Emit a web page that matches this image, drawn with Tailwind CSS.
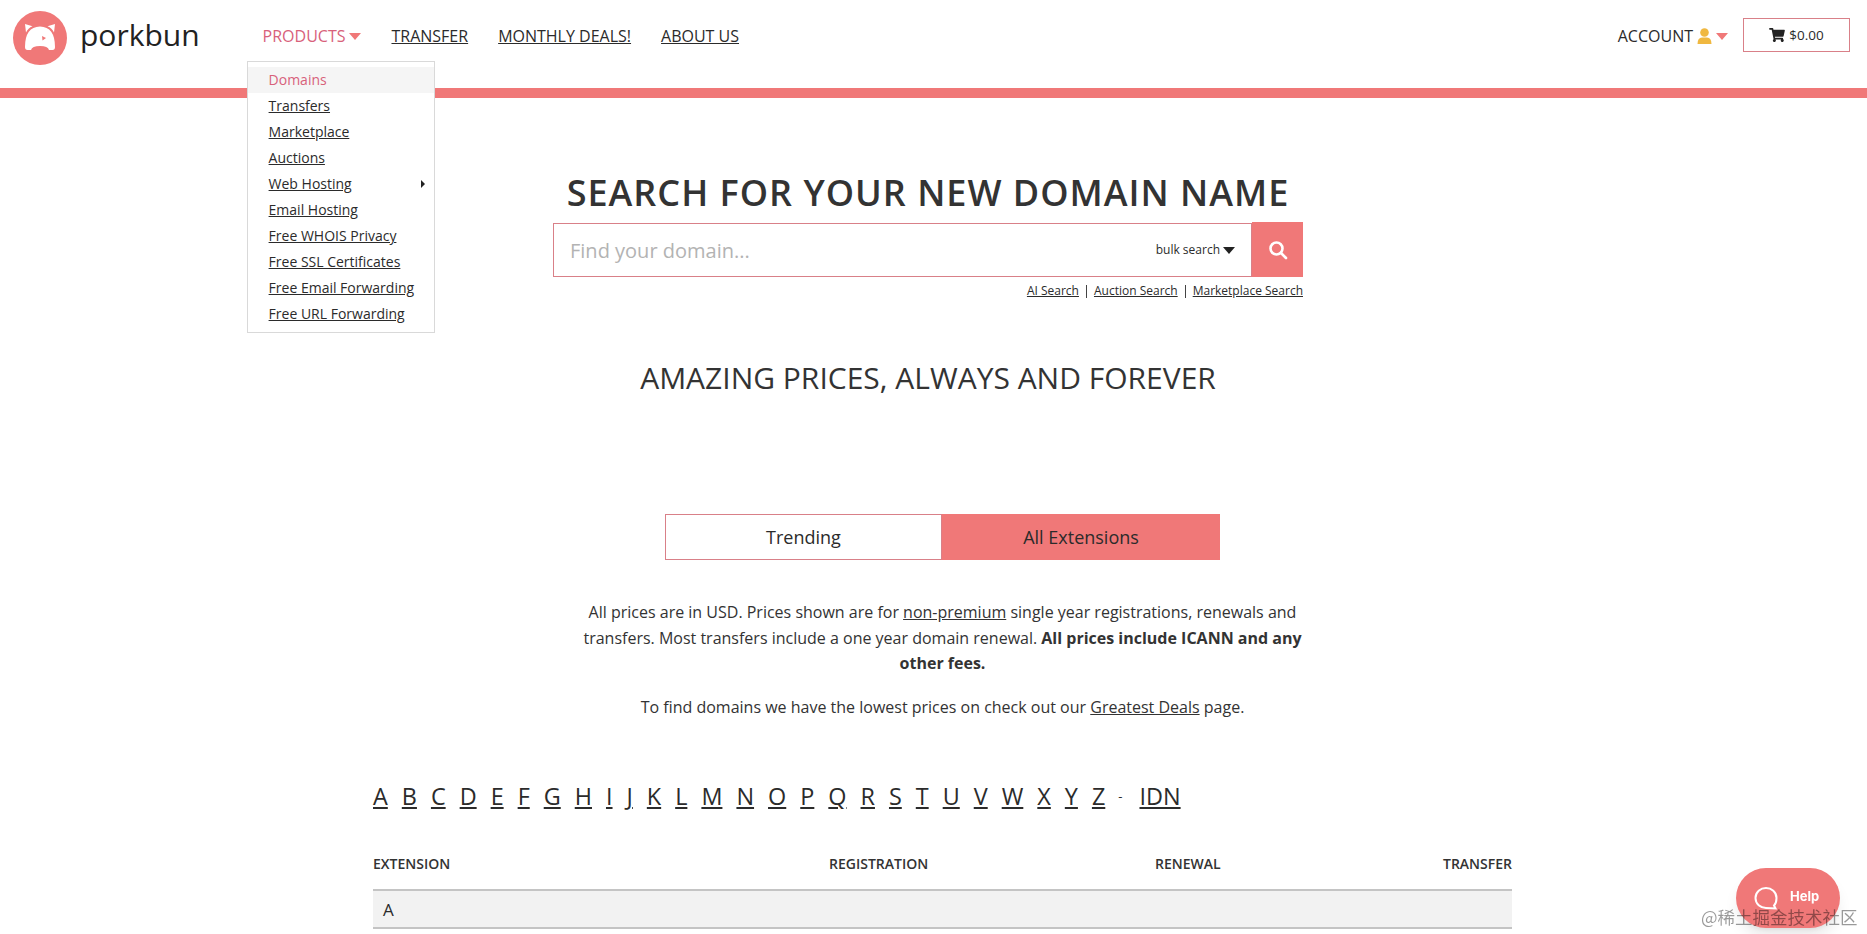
<!DOCTYPE html>
<html lang="en">
<head>
  <meta charset="UTF-8" />
  <meta name="viewport" content="width=device-width, initial-scale=1.0" />
  <title>porkbun - Domain Pricing</title>
  <script src="https://cdn.jsdelivr.net/npm/@tailwindcss/browser@4"></script>
</head>
<body class="h-[934px] overflow-hidden bg-white text-[#2b2b2b] font-['Open_Sans','Noto_Sans',sans-serif]">

  <!-- Header -->
  <header class="relative h-[88px] flex items-start">
    <a href="#" class="flex items-center ml-[13px] mt-[11px] shrink-0">
      <svg width="54" height="54" viewBox="0 0 54 54">
        <circle cx="27" cy="27" r="27" fill="#f07878" />
        <path d="M12 36 Q12 16 27 15.5 Q42 16 42 36 Q42 39 39.5 39 L36 39 Q35 35 27 35 Q19 35 18 39 L14.5 39 Q12 39 12 36 Z" fill="#fff" />
        <path d="M12 13 L19.5 15.2 Q15 17 13 21.5 Z" fill="#fff" />
        <path d="M42 13 L34.5 15.2 Q39 17 41 21.5 Z" fill="#fff" />
        <path d="M29 25 L33 27 L29.5 29.5 Z" fill="#f07878" />
      </svg>
      <span class="ml-[13px] -mt-[7px] text-[30px] leading-none text-[#222]">porkbun</span>
    </a>

    <nav class="flex gap-[30px] ml-[63px] mt-[24px] text-[16px] leading-[24px]">
      <div class="relative flex items-center gap-[4px] text-[#d8617b]">
        <span>PRODUCTS</span>
        <span class="w-0 h-0 border-x-[6px] border-x-transparent border-t-[7px] border-t-[#f07878]"></span>

        <!-- Products dropdown -->
        <div class="absolute z-10 left-[-16px] top-[37px] w-[188px] h-[272px] pt-[5px] bg-white border border-[#d9d9d9] text-[14px] leading-[26px] text-[#2b2b2b]">
          <a href="#" class="block h-[26px] pl-[21px] bg-[#f5f5f5] text-[#d8617b]">Domains</a>
          <a href="#" class="block h-[26px] pl-[21px] underline">Transfers</a>
          <a href="#" class="block h-[26px] pl-[21px] underline">Marketplace</a>
          <a href="#" class="block h-[26px] pl-[21px] underline">Auctions</a>
          <div class="flex items-center justify-between h-[26px] pl-[21px] pr-[9px]">
            <a href="#" class="underline">Web Hosting</a>
            <span class="w-0 h-0 border-y-[4px] border-y-transparent border-l-[4px] border-l-[#222]"></span>
          </div>
          <a href="#" class="block h-[26px] pl-[21px] underline">Email Hosting</a>
          <a href="#" class="block h-[26px] pl-[21px] underline">Free WHOIS Privacy</a>
          <a href="#" class="block h-[26px] pl-[21px] underline">Free SSL Certificates</a>
          <a href="#" class="block h-[26px] pl-[21px] underline">Free Email Forwarding</a>
          <a href="#" class="block h-[26px] pl-[21px] underline">Free URL Forwarding</a>
        </div>
      </div>
      <a href="#" class="underline">TRANSFER</a>
      <a href="#" class="underline">MONTHLY DEALS!</a>
      <a href="#" class="underline">ABOUT US</a>
    </nav>

    <div class="ml-auto mr-[17px] mt-[18px] flex items-center">
      <span class="text-[16px] mt-[2px] ml-[1px]">ACCOUNT</span>
      <svg class="ml-[4px] mt-[2px]" width="15" height="16" viewBox="0 0 15 16">
        <circle cx="7.5" cy="4.5" r="4.3" fill="#f0b840" />
        <path d="M0.5 16 Q0.5 9.5 5 9.5 L10 9.5 Q14.5 9.5 14.5 16 Z" fill="#f0b840" />
      </svg>
      <span class="ml-[4px] mt-[2px] w-0 h-0 border-x-[6px] border-x-transparent border-t-[7px] border-t-[#f07878]"></span>
      <a href="#" class="ml-[15px] w-[107px] h-[34px] flex items-center justify-center gap-[4px] border border-[#d98088] text-[13.5px]">
        <svg width="16" height="14" viewBox="0 0 576 512" fill="#222"><path d="M528.12 301.319l47.273-208C578.806 78.301 567.391 64 551.99 64H159.208l-9.166-44.81C147.758 8.021 137.93 0 126.529 0H24C10.745 0 0 10.745 0 24v16c0 13.255 10.745 24 24 24h69.883l70.248 343.435C147.325 417.1 136 435.222 136 456c0 30.928 25.072 56 56 56s56-25.072 56-56c0-15.674-6.447-29.835-16.824-40h209.647C430.447 426.165 424 440.326 424 456c0 30.928 25.072 56 56 56s56-25.072 56-56c0-22.172-12.888-41.332-31.579-50.405l5.517-24.276c3.413-15.018-8.002-29.319-23.403-29.319H218.117l-6.545-32h293.145c11.206 0 20.92-7.754 23.403-18.681z"/></svg>
        <span>$0.00</span>
      </a>
    </div>
  </header>
  <div class="h-[10px] bg-[#f07878]"></div>

  <!-- Search -->
  <section class="w-[750px] ml-[553px]">
    <h1 class="mt-[75px] text-center text-[36px] leading-[40px] font-semibold tracking-[1px] text-[#333]">SEARCH FOR YOUR NEW DOMAIN NAME</h1>
    <div class="mt-[9px] flex h-[55px]">
      <div class="flex-1 flex items-center mt-px h-[54px] pl-[16px] pr-[16px] border border-[#d98088]">
        <span class="text-[20px] mt-[1px] text-[#b3b3b3]">Find your domain...</span>
        <span class="ml-auto text-[12px] mr-[-1px]">bulk search</span>
        <span class="ml-[4px] w-0 h-0 border-x-[6px] border-x-transparent border-t-[7px] border-t-[#222]"></span>
      </div>
      <button class="w-[51px] flex items-center justify-center bg-[#f07878]">
        <svg width="20" height="20" viewBox="0 0 20 20" fill="none" stroke="#fff" stroke-width="2.6" stroke-linecap="round"><circle cx="8.5" cy="8.5" r="6" /><path d="M13 13 L18 18" /></svg>
      </button>
    </div>
    <div class="mt-[6px] flex justify-end items-center h-[16px] text-[12px] leading-[16px]">
      <a href="#" class="underline">AI Search</a>
      <span class="mx-[7px] w-px h-[13px] bg-[#444]"></span>
      <a href="#" class="underline">Auction Search</a>
      <span class="mx-[7px] w-px h-[13px] bg-[#444]"></span>
      <a href="#" class="underline">Marketplace Search</a>
    </div>
  </section>

  <h2 class="w-[750px] ml-[553px] mt-[59px] text-center text-[30px] leading-[40px] text-[#333]">AMAZING PRICES, ALWAYS AND FOREVER</h2>

  <!-- Pricing -->
  <section class="w-[1139px] ml-[373px]">
    <div class="mt-[116px] mx-auto w-[555px] h-[46px] flex text-[18px]">
      <div class="w-[277px] flex items-center justify-center border border-[#d98088]">Trending</div>
      <div class="flex-1 flex items-center justify-center bg-[#f07878]">All Extensions</div>
    </div>

    <div class="mt-[40px] mx-auto w-[730px] text-center text-[16px] leading-[25.6px] text-[#333]">
      <p>All prices are in USD. Prices shown are for <a href="#" class="underline">non-premium</a> single year registrations, renewals and transfers. Most transfers include a one year domain renewal. <b class="font-bold">All prices include ICANN and any other fees.</b></p>
      <p class="mt-[18px]">To find domains we have the lowest prices on check out our <a href="#" class="underline">Greatest Deals</a> page.</p>
    </div>

    <div class="mt-[61px] flex items-center gap-[14px] text-[23.4px] leading-[30px]">
      <a href="#" class="underline">A</a><a href="#" class="underline">B</a><a href="#" class="underline">C</a><a href="#" class="underline">D</a><a href="#" class="underline">E</a><a href="#" class="underline">F</a><a href="#" class="underline">G</a><a href="#" class="underline">H</a><a href="#" class="underline">I</a><a href="#" class="underline">J</a><a href="#" class="underline">K</a><a href="#" class="underline">L</a><a href="#" class="underline">M</a><a href="#" class="underline">N</a><a href="#" class="underline">O</a><a href="#" class="underline">P</a><a href="#" class="underline">Q</a><a href="#" class="underline">R</a><a href="#" class="underline">S</a><a href="#" class="underline">T</a><a href="#" class="underline">U</a><a href="#" class="underline">V</a><a href="#" class="underline">W</a><a href="#" class="underline">X</a><a href="#" class="underline">Y</a><a href="#" class="underline">Z</a>
      <span class="text-[13px] ml-[-1px]">-</span>
      <a href="#" class="underline ml-[3px]">IDN</a>
    </div>

    <div class="mt-[43px] grid grid-cols-[456px_326px_1fr_auto] text-[14px] leading-[20px] font-semibold text-[#333]">
      <div>EXTENSION</div>
      <div>REGISTRATION</div>
      <div>RENEWAL</div>
      <div>TRANSFER</div>
    </div>
    <div class="mt-[15px] h-[40px] flex items-center pl-[10px] bg-[#f2f2f2] border-y-2 border-[#c4c4c4] text-[17px]">A</div>
  </section>

  <!-- Help button and watermark sit over the page -->
  <button class="fixed left-[1736px] top-[868px] w-[104px] h-[60px] rounded-[30px] flex items-center gap-[12px] pl-[18px] bg-[#f07878] shadow-lg text-white text-[13px] font-bold font-['Inter',sans-serif]">
    <svg width="24" height="24" viewBox="0 0 24 24" fill="none" stroke="#fff" stroke-width="2"><path d="M12 2 C6.5 2 1.5 6 1.5 12 C1.5 18 6.5 22 12 22 L21.5 22.5 L20 19.5 C21.8 17.8 22.5 15 22.5 12 C22.5 6 17.5 2 12 2 Z" /></svg>
    <span class="-mt-[2px]">Help</span>
  </button>
  <div class="fixed left-[1701px] top-[906px] text-[17.5px] leading-[22px] text-black/40 font-['Noto_Sans_CJK_SC',sans-serif]">@稀土掘金技术社区</div>
</body>
</html>
